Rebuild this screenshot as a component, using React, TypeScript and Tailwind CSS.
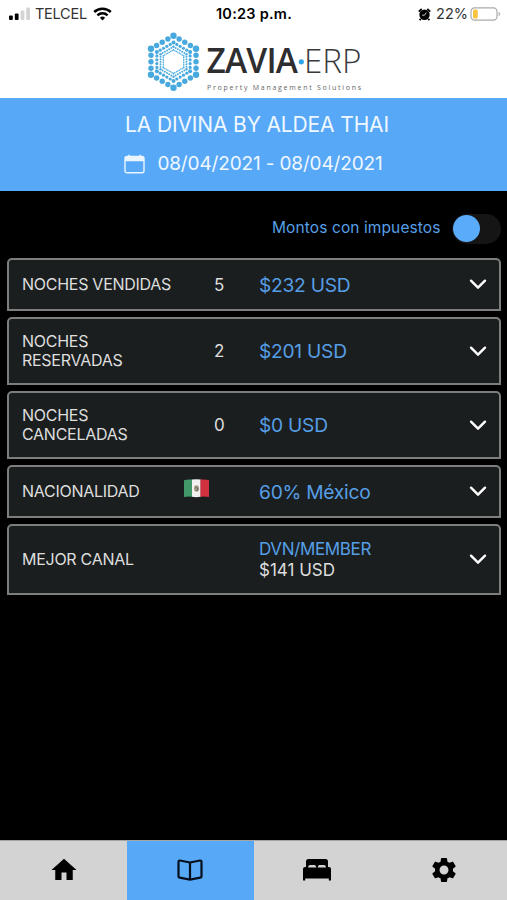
import { useState } from 'react'
import type { ReactNode } from 'react'
import { MdHome, MdSettings } from 'react-icons/md'

const RINGS = [
  { radius: 26, dots: 4, size: 2.7, vertex: 3.2 },
  { radius: 19.2, dots: 5, size: 1.6, vertex: 2 },
  { radius: 15, dots: 6, size: 0.95, vertex: 1.2 },
  { radius: 11.8, dots: 7, size: 0.75, vertex: 0.9 },
]

function hexDots(radius: number, dots: number) {
  const corners = Array.from({ length: 6 }, (_, i) => {
    const angle = (Math.PI / 3) * i - Math.PI / 2
    return [radius * Math.cos(angle), radius * Math.sin(angle)]
  })
  return corners.flatMap(([x, y], i) => {
    const [nx, ny] = corners[(i + 1) % 6]
    return Array.from({ length: dots }, (_, k) => ({
      x: x + ((nx - x) * k) / dots,
      y: y + ((ny - y) * k) / dots,
      corner: k === 0,
    }))
  })
}

function Logo() {
  return (
    <svg width="218" height="64" viewBox="145 30 218 64" fontFamily="'Open Sans', sans-serif">
      <g fill="#48a9df" transform="translate(173.5 61.7)">
        {RINGS.map((ring) =>
          hexDots(ring.radius, ring.dots).map((d, i) => (
            <circle key={`${ring.radius}-${i}`} cx={d.x} cy={d.y} r={d.corner ? ring.vertex : ring.size} />
          )),
        )}
      </g>
      <text x="206.5" y="72.5" fontSize="33.5" fontWeight="600" fill="#2e2e30" textLength="91.5">
        ZAVIA
      </text>
      <circle cx="301.3" cy="61.8" r="2.6" fill="#2ea3e6" />
      <text x="304" y="72.5" fontSize="33.5" fontWeight="300" fill="#3a3a3c" textLength="57.5" lengthAdjust="spacingAndGlyphs">
        ERP
      </text>
      <text x="207" y="89.5" fontSize="7" fill="#666" textLength="154">
        Property Management Solutions
      </text>
    </svg>
  )
}

function StatusBar() {
  return (
    <div className="grid h-7 grid-cols-3 items-center pr-[6px] pl-[9px] text-black">
      <div className="flex items-center">
        <svg width="22" height="14" viewBox="0 0 22 14">
          <rect x="0" y="8.5" width="3.8" height="4.5" rx="1" />
          <rect x="5.8" y="6.5" width="3.8" height="6.5" rx="1" />
          <rect x="11.6" y="3.5" width="3.8" height="9.5" rx="1" fill="#d4d4d4" />
          <rect x="17.2" y="0.5" width="3.8" height="12.5" rx="1" fill="#d4d4d4" />
        </svg>
        <span className="ml-1 text-[14.5px] tracking-[-0.25px] text-[#333]">TELCEL</span>
        <svg className="ml-[6px]" width="19" height="14" viewBox="0 0 19 14" fill="none" stroke="#000" strokeWidth="2.5">
          <path d="M1.2 5a12 12 0 0 1 16.6 0" />
          <path d="M4.4 8.4a7.3 7.3 0 0 1 10.2 0" />
          <path d="M9.5 13.4 6.9 10.7a3.7 3.7 0 0 1 5.2 0z" fill="#000" stroke="none" />
        </svg>
      </div>
      <span className="pr-[2px] text-center text-[14.5px] font-semibold tracking-[0.25px] whitespace-nowrap">10:23 p.m.</span>
      <div className="flex items-center justify-end">
        <svg width="13" height="13" viewBox="0 0 13 13">
          <circle cx="6.5" cy="6.8" r="5.2" />
          <path d="M0.8 3.6 3.7 1M12.2 3.6 9.3 1M2.8 10.8l-1.2 1.4M10.2 10.8l1.2 1.4" stroke="#000" strokeWidth="1.8" />
          <path d="M6.5 7.2 8.3 4.6M6.5 7.2H4.2" stroke="#fff" strokeWidth="0.8" fill="none" />
        </svg>
        <span className="ml-[5px] text-[14.5px] text-[#333]">22%</span>
        <svg className="ml-[2px]" width="31" height="14" viewBox="0 0 31 14">
          <rect x="1" y="0.8" width="26" height="12.4" rx="3.6" fill="#fff" stroke="#aaa" strokeWidth="1.2" />
          <rect x="3" y="2.6" width="4.8" height="8.8" rx="1.5" fill="#f9c440" />
          <path d="M28.6 4.8c2 .8 2 3.6 0 4.4z" fill="#aaa" />
        </svg>
      </div>
    </div>
  )
}

function CalendarIcon() {
  return (
    <svg width="21" height="20" viewBox="0 0 21 20">
      <rect x="1" y="2.4" width="19" height="16.4" rx="2" fill="none" stroke="#eaf5ff" strokeWidth="1.4" />
      <path d="M1 7.3V4a1.7 1.7 0 0 1 1.7-1.7h15.6A1.7 1.7 0 0 1 20 4v3.3z" fill="#eaf5ff" />
      <path d="M5 .8v2M16 .8v2" stroke="#eaf5ff" strokeWidth="1.6" />
    </svg>
  )
}

function MexicoFlag() {
  return (
    <svg width="25" height="19" viewBox="0 0 25 19">
      <path d="M0 1.2Q4 0 8.3.6v17.2Q4 17.2 0 18z" fill="#43986a" />
      <path d="M8 .6q4.3-.7 8.7 0v17.2q-4.4.7-8.7 0z" fill="#f3f1ef" />
      <path d="M16.5.6Q21 .2 25 1v17q-4-.8-8.5-.2z" fill="#d1303e" />
      <ellipse cx="12.5" cy="9.5" rx="2.5" ry="3.3" fill="#a39b8a" />
      <path d="M11 9.5q1.5-3 2.7-.5t-1.7 2.5" stroke="#6d665a" strokeWidth="1" fill="none" />
    </svg>
  )
}

function Chevron() {
  return (
    <svg width="18" height="11" viewBox="0 0 18 11" fill="none" stroke="#fff" strokeWidth="2.4" strokeLinecap="round" strokeLinejoin="round">
      <path d="M2 1.7 9 8.7 16 1.7" />
    </svg>
  )
}

type CardProps = {
  label: string
  height: string
  count?: ReactNode
  children: ReactNode
}

function Card({ label, height, count, children }: CardProps) {
  return (
    <button
      className={`grid w-full grid-cols-[162px_75px_1fr_18px] items-center rounded-t-[5px] border-2 border-[#7c7e7e] bg-[#1b1e1f] pr-[12px] pl-[13px] text-left ${height}`}
    >
      <span className="w-[155px] text-[16px] leading-[19px] tracking-[-0.27px] text-[#dedede]">{label}</span>
      <span className="flex text-[17px] text-[#dedede]">{count}</span>
      <span className="pt-px text-[19.2px] tracking-[-0.25px] text-[#569fe6]">{children}</span>
      <Chevron />
    </button>
  )
}

function Count({ value }: { value: number }) {
  return <span className="pt-[2px] pl-[30px]">{value}</span>
}

function BookIcon() {
  return (
    <svg className="mb-[2px]" width="26" height="22" viewBox="0 0 26 22" fill="none" stroke="#06101c" strokeWidth="2.2" strokeLinejoin="round">
      <path d="M13 3.5 3 1.5Q1.500 1.300 1.500 3v14.400q0 1.100 1.200 1.300L13 20.600l10.300-1.900q1.200-.2 1.200-1.300V3q0-1.700-1.500-1.500z" />
      <path d="M13 3.5v17.100" />
    </svg>
  )
}

function BedIcon() {
  return (
    <svg className="mb-[2px]" width="28" height="22" viewBox="0 0 28 22">
      <path d="M5.5 0h17A2.5 2.5 0 0 1 25 2.5V9H3V2.5A2.5 2.5 0 0 1 5.5 0z" />
      <path d="M2 8h24a2 2 0 0 1 2 2v11.500h-2.200V19.500H2.200v2H0V10a2 2 0 0 1 2-2z" />
      <path d="M5 8.600Q5 6 7 6h4.500q1.800 0 1.800 2.600zM14.700 8.600q0-2.600 1.800-2.600H21q2 0 2 2.600z" fill="#d3d3d3" />
    </svg>
  )
}

const TABS = [
  { name: 'Inicio', icon: <MdHome size={30} className="mb-px ml-px" /> },
  { name: 'Reporte', icon: <BookIcon /> },
  { name: 'Habitaciones', icon: <BedIcon /> },
  { name: 'Ajustes', icon: <MdSettings size={30} className="mb-[2px]" /> },
]

export default function App() {
  const [taxes, setTaxes] = useState(false)
  const [tab, setTab] = useState(1)

  return (
    <div className="flex h-[900px] w-[507px] flex-col overflow-hidden bg-black font-['Inter',sans-serif]">
      <header className="h-[98px] shrink-0 bg-white">
        <StatusBar />
        <div className="flex pt-[2px] pl-[145px]">
          <Logo />
        </div>
      </header>

      <section className="flex h-[93px] shrink-0 flex-col items-center bg-[#58a8f8] pt-[12px] text-[#f0f8ff]">
        <h1 className="pl-[7px] text-[21px] leading-[30px] tracking-[-0.14px]">LA DIVINA BY ALDEA THAI</h1>
        <div className="mt-[9px] flex items-center gap-[12px]">
          <CalendarIcon />
          <span className="text-[19px] leading-[30px] tracking-[-0.15px]">08/04/2021 - 08/04/2021</span>
        </div>
      </section>

      <main className="flex-1 pt-[22px] pr-[6.5px] pl-[7px]">
        <div className="flex h-[31px] items-center justify-end gap-[11px]">
          <span className="pb-px text-[15.5px] tracking-[0.1px] text-[#569fe6]">Montos con impuestos</span>
          <button
            role="switch"
            aria-checked={taxes}
            onClick={() => setTaxes(!taxes)}
            className={`flex h-[30px] w-[49px] items-center rounded-full bg-[#151515] px-[1px] ${taxes ? 'justify-end' : ''}`}
          >
            <span className="size-[27px] rounded-full bg-[#5aabfa]" />
          </button>
        </div>

        <div className="mt-[14px] flex flex-col gap-[6px]">
          <Card label="NOCHES VENDIDAS" height="h-[53px]" count={<Count value={5} />}>
            $232 USD
          </Card>
          <Card label="NOCHES RESERVADAS" height="h-[68px]" count={<Count value={2} />}>
            $201 USD
          </Card>
          <Card label="NOCHES CANCELADAS" height="h-[68px]" count={<Count value={0} />}>
            $0 USD
          </Card>
          <Card
            label="NACIONALIDAD"
            height="h-[53px]"
            count={
              <span className="mb-[7px]">
                <MexicoFlag />
              </span>
            }
          >
            60% México
          </Card>
          <Card label="MEJOR CANAL" height="h-[71px]">
            <span className="block text-[17px] leading-[21px] tracking-[-0.35px]">DVN/MEMBER</span>
            <span className="block text-[17px] leading-[21px] tracking-[0px] text-[#dedede]">$141 USD</span>
          </Card>
        </div>
      </main>

      <nav className="grid h-[60px] shrink-0 grid-cols-4 border-t border-[#a5a5a5] bg-[#d3d3d3]">
        {TABS.map((t, i) => (
          <button
            key={t.name}
            aria-label={t.name}
            onClick={() => setTab(i)}
            className={`flex items-center justify-center ${i === tab ? 'bg-[#58a8f8]' : ''}`}
          >
            {t.icon}
          </button>
        ))}
      </nav>
    </div>
  )
}
